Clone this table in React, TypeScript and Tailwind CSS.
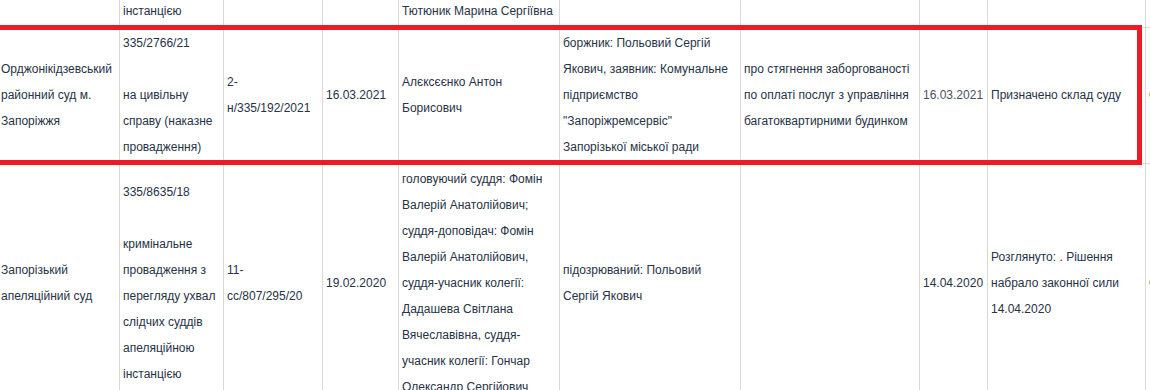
import React from "react";

function Cell({
  children,
  pl = "pl-[3px]",
  pr = "pr-[2px]",
  color = "text-[#263246]",
  br = "border-r",
  extra = "",
}: {
  children?: React.ReactNode;
  pl?: string;
  pr?: string;
  color?: string;
  br?: string;
  extra?: string;
}) {
  return (
    <div
      className={`flex items-center ${br} border-b border-[#d9d9d9] pt-[2px] pb-[3px] ${pl} ${pr} text-[12px] leading-[26px] ${color} ${extra}`}
    >
      <div className="min-w-0">{children}</div>
    </div>
  );
}

export default function App() {
  return (
    <div
      className="relative h-[390px] w-[1150px] overflow-hidden bg-white"
      style={{ fontFamily: '"Liberation Sans", Arial, sans-serif' }}
    >
      <div className="mt-[-4px] grid w-[1246px] grid-cols-[120px_104px_99px_76px_161px_181px_179px_68px_158px_100px]">
        {/* Row 1 (tail of previous entry) */}
        <Cell pl="pl-[1px]" pr="pr-[1px]" />
        <Cell>інстанцією</Cell>
        <Cell pr="pr-[4px]" />
        <Cell />
        <Cell>Тютюник Марина Сергіївна</Cell>
        <Cell />
        <Cell />
        <Cell />
        <Cell />
        <Cell br="border-r-0" />

        {/* Row 2 (highlighted) */}
        <Cell pl="pl-[1px]" pr="pr-[1px]">
          Орджонікідзевський районний суд м. Запоріжжя
        </Cell>
        <Cell>
          335/2766/21
          <br />
          <br />
          на цивільну справу (наказне провадження)
        </Cell>
        <Cell pr="pr-[4px]">2-н/335/192/2021</Cell>
        <Cell>16.03.2021</Cell>
        <Cell>Алєксєєнко Антон Борисович</Cell>
        <Cell>
          боржник: Польовий Сергій Якович, заявник: Комунальне підприємство
          "Запоріжремсервіс" Запорізької міської ради
        </Cell>
        <Cell pr="pr-[1px]">
          про стягнення заборгованості по оплаті послуг з управління
          багатоквартирними будинком
        </Cell>
        <Cell color="text-[#4a5163]">16.03.2021</Cell>
        <Cell>Призначено склад суду</Cell>
        <Cell br="border-r-0" extra="whitespace-nowrap">
          Справа
        </Cell>

        {/* Row 3 */}
        <Cell pl="pl-[1px]" pr="pr-[1px]">
          Запорізький апеляційний суд
        </Cell>
        <Cell>
          335/8635/18
          <br />
          <br />
          кримінальне провадження з перегляду ухвал слідчих суддів
          апеляційною інстанцією
        </Cell>
        <Cell pr="pr-[4px]">11-сс/807/295/20</Cell>
        <Cell>19.02.2020</Cell>
        <Cell>
          головуючий суддя: Фомін Валерій Анатолійович; суддя-доповідач: Фомін
          Валерій Анатолійович, суддя-учасник колегії: Дадашева Світлана
          Вячеславівна, суддя-учасник колегії: Гончар Олександр Сергійович
        </Cell>
        <Cell>підозрюваний: Польовий Сергій Якович</Cell>
        <Cell />
        <Cell>14.04.2020</Cell>
        <Cell>Розглянуто: . Рішення набрало законної сили 14.04.2020</Cell>
        <Cell br="border-r-0" extra="whitespace-nowrap">
          Справа
        </Cell>
      </div>

      {/* Red highlight annotation */}
      <div className="pointer-events-none absolute left-[-10px] top-[25px] h-[140px] w-[1152px] border-[5px] border-[#ed1c24]" />
    </div>
  );
}
